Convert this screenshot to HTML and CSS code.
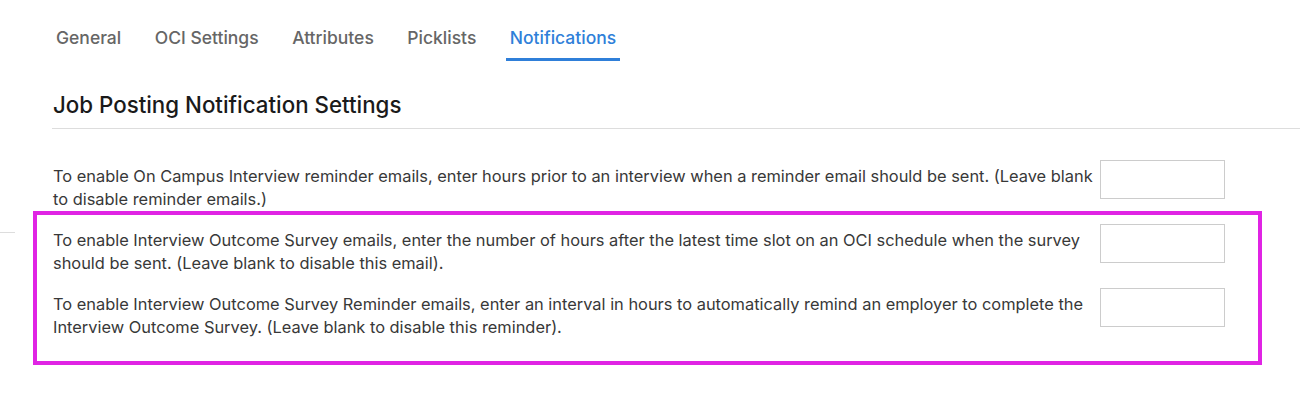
FILE: index.html
```html
<!DOCTYPE html>
<html lang="en">
<head>
  <meta charset="UTF-8">
  <meta name="viewport" content="width=device-width, initial-scale=1.0">
  <title>Notifications</title>
  <link rel="stylesheet" href="styles.css">
</head>
<body>
  <nav class="tabs">
    <a class="tab" href="#">General</a>
    <a class="tab" href="#">OCI Settings</a>
    <a class="tab" href="#">Attributes</a>
    <a class="tab" href="#">Picklists</a>
    <a class="tab active" href="#">Notifications</a>
  </nav>

  <div class="side-rule"></div>

  <main class="content">
    <h2 class="section-title">Job Posting Notification Settings</h2>

    <div class="settings">
      <div class="setting-row">
        <label class="setting-text" for="oci-reminder">To enable On Campus Interview reminder emails, enter hours prior to an interview when a reminder email should be sent. (Leave blank to disable reminder emails.)</label>
        <input class="hours-input" id="oci-reminder" type="text">
      </div>
      <div class="setting-row">
        <label class="setting-text" for="survey-hours">To enable Interview Outcome Survey emails, enter the number of hours after the latest time slot on an OCI schedule when the survey should be sent. (Leave blank to disable this email).</label>
        <input class="hours-input" id="survey-hours" type="text">
      </div>
      <div class="setting-row">
        <label class="setting-text" for="survey-reminder">To enable Interview Outcome Survey Reminder emails, enter an interval in hours to automatically remind an employer to complete the Interview Outcome Survey. (Leave blank to disable this reminder).</label>
        <input class="hours-input" id="survey-reminder" type="text">
      </div>
    </div>
  </main>

  <!-- annotation box over the survey settings -->
  <div class="highlight"></div>
</body>
</html>
```

FILE: styles.css
```css
body {
  margin: 0;
  font-family: Inter, "Open Sans", sans-serif;
  background-color: #fff;
  color: #383838;
}
.tabs {
  display: flex;
  gap: 25.5px;
  padding: 23px 0 0 52px;
}
.tab {
  display: block;
  padding: 4px 4px 10px;
  font-size: 17.5px;
  font-weight: 500;
  color: #666;
  text-decoration: none;
  border-bottom: 3px solid transparent;
}
.tab.active {
  color: #2f7fd9;
  border-bottom-color: #2f7fd9;
}
.side-rule {
  position: absolute;
  left: 0;
  top: 232px;
  width: 15px;
  height: 1px;
  background-color: #ddd;
}
.content {
  padding-left: 52px;
}
.section-title {
  margin: 30px 0 0;
  padding: 0 0 10px 1px;
  font-size: 22.3px;
  font-weight: 500;
  color: #1a1a1a;
  border-bottom: 1px solid #ddd;
}
.settings {
  display: flex;
  flex-direction: column;
  gap: 13px;
  padding-top: 31px;
}
.setting-row {
  display: flex;
  align-items: flex-start;
  gap: 6px;
  padding-left: 1px;
}
.setting-text {
  width: 1041px;
  margin-top: 5px;
  font-size: 16.4px;
  line-height: 23px;
  color: #383838;
}
.hours-input {
  width: 125px;
  height: 39px;
  box-sizing: border-box;
  border: 1px solid #ccc;
  padding: 6px;
  font-size: 15px;
}
.highlight {
  position: absolute;
  left: 33px;
  top: 211px;
  width: 1229px;
  height: 154px;
  box-sizing: border-box;
  border: 4px solid #e024e4;
  pointer-events: none;
}
```
